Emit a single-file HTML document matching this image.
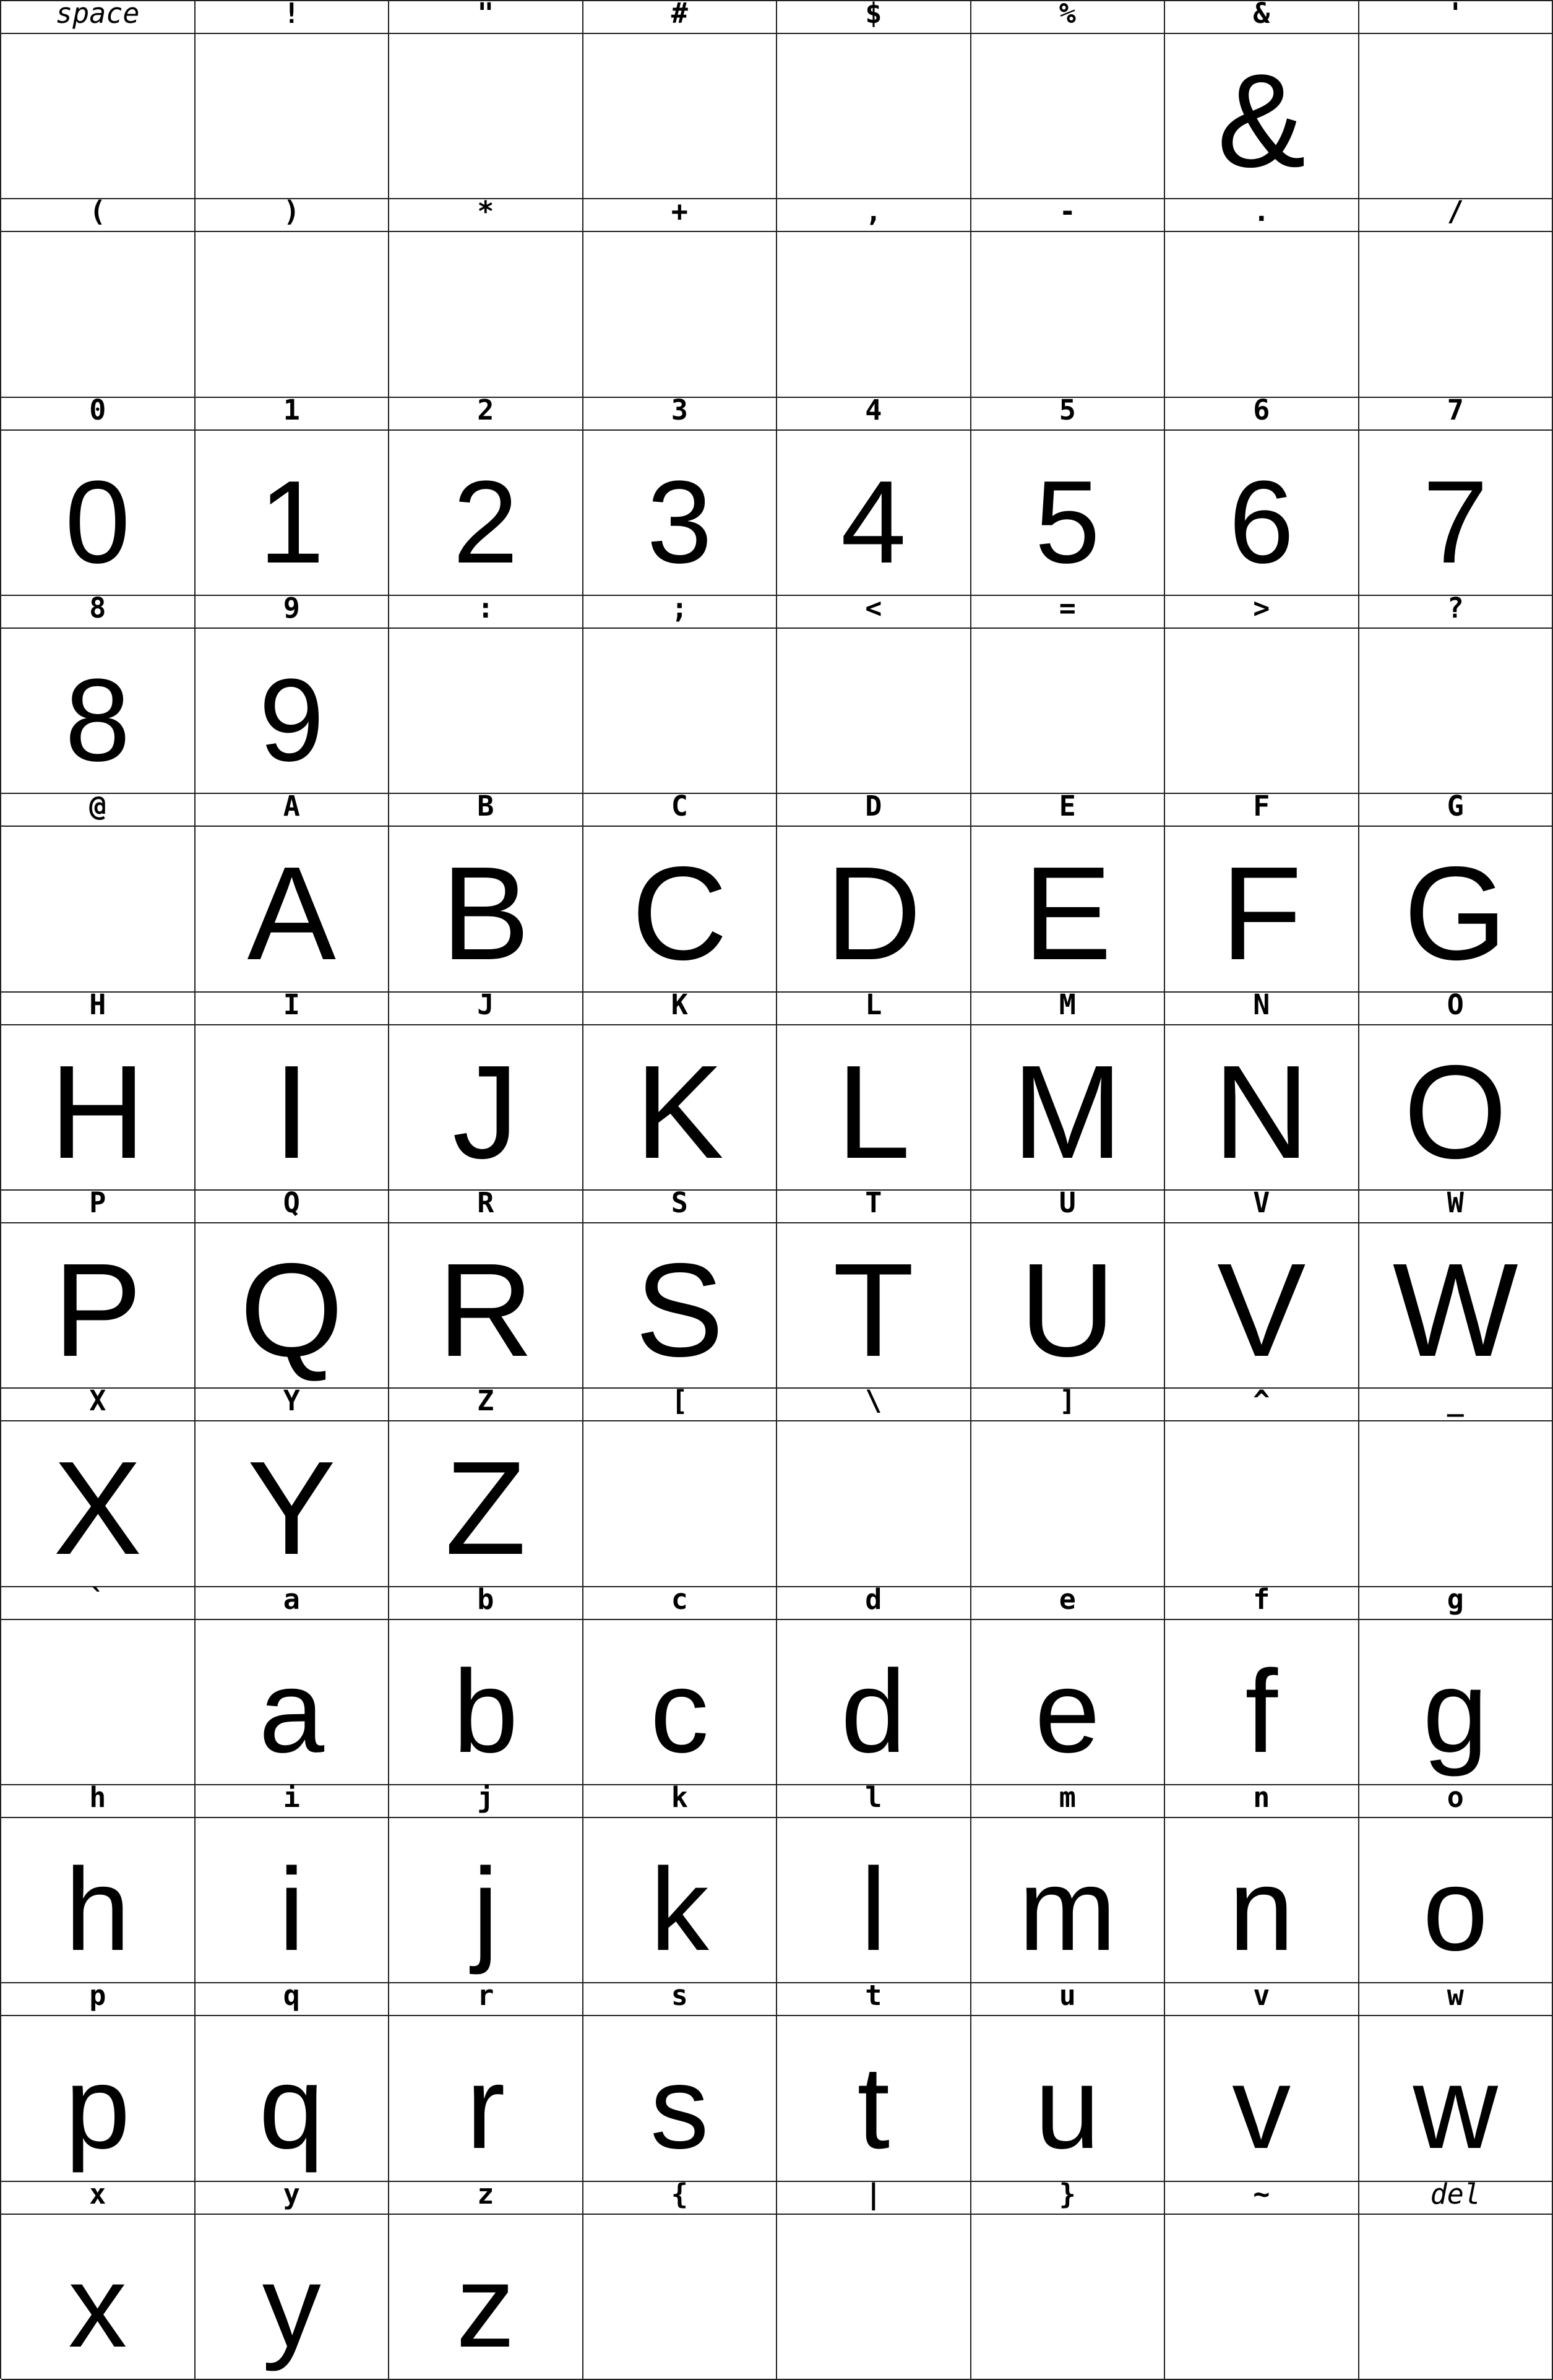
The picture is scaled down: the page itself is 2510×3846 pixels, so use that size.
<!DOCTYPE html>
<html><head><meta charset="utf-8"><style>
html,body{margin:0;padding:0;background:#fff;}
body{width:2510px;height:3844px;overflow:hidden;position:relative;}
.grid{position:absolute;left:0;top:0;width:2510px;height:3844px;display:grid;grid-template-columns:repeat(8,1fr);grid-template-rows:repeat(12,53px 267.33px);border-left:2px solid #222;border-top:2px solid #222;box-sizing:border-box;}
.grid>div{border-right:2px solid #222;border-bottom:2px solid #222;box-sizing:border-box;position:relative;overflow:visible;text-align:center;}
.h{font-family:"DejaVu Sans Mono","Liberation Mono",monospace;font-weight:bold;font-size:45px;line-height:53px;}
.h span{position:relative;top:-7px;display:inline-block;}
.h i{font-weight:normal;}
.g span{position:absolute;left:0;right:0;top:32px;font-family:"Liberation Sans",sans-serif;font-size:215px;line-height:215px;color:#000;}
.l span{top:53px;font-size:190px;line-height:190px;}
</style></head><body><div class="grid">
<div class="h"><span><i>space</i></span></div><div class="h"><span>!</span></div><div class="h"><span>"</span></div><div class="h"><span>#</span></div><div class="h"><span>$</span></div><div class="h"><span>%</span></div><div class="h"><span>&amp;</span></div><div class="h"><span>'</span></div>
<div class="g"></div><div class="g"></div><div class="g"></div><div class="g"></div><div class="g"></div><div class="g"></div><div class="g"><span>&amp;</span></div><div class="g"></div>
<div class="h"><span>(</span></div><div class="h"><span>)</span></div><div class="h"><span>*</span></div><div class="h"><span>+</span></div><div class="h"><span>,</span></div><div class="h"><span>-</span></div><div class="h"><span>.</span></div><div class="h"><span>/</span></div>
<div class="g"></div><div class="g"></div><div class="g"></div><div class="g"></div><div class="g"></div><div class="g"></div><div class="g"></div><div class="g"></div>
<div class="h"><span>0</span></div><div class="h"><span>1</span></div><div class="h"><span>2</span></div><div class="h"><span>3</span></div><div class="h"><span>4</span></div><div class="h"><span>5</span></div><div class="h"><span>6</span></div><div class="h"><span>7</span></div>
<div class="g l"><span>0</span></div><div class="g l"><span>1</span></div><div class="g l"><span>2</span></div><div class="g l"><span>3</span></div><div class="g l"><span>4</span></div><div class="g l"><span>5</span></div><div class="g l"><span>6</span></div><div class="g l"><span>7</span></div>
<div class="h"><span>8</span></div><div class="h"><span>9</span></div><div class="h"><span>:</span></div><div class="h"><span>;</span></div><div class="h"><span>&lt;</span></div><div class="h"><span>=</span></div><div class="h"><span>&gt;</span></div><div class="h"><span>?</span></div>
<div class="g l"><span>8</span></div><div class="g l"><span>9</span></div><div class="g"></div><div class="g"></div><div class="g"></div><div class="g"></div><div class="g"></div><div class="g"></div>
<div class="h"><span>@</span></div><div class="h"><span>A</span></div><div class="h"><span>B</span></div><div class="h"><span>C</span></div><div class="h"><span>D</span></div><div class="h"><span>E</span></div><div class="h"><span>F</span></div><div class="h"><span>G</span></div>
<div class="g"></div><div class="g"><span>A</span></div><div class="g"><span>B</span></div><div class="g"><span>C</span></div><div class="g"><span>D</span></div><div class="g"><span>E</span></div><div class="g"><span>F</span></div><div class="g"><span>G</span></div>
<div class="h"><span>H</span></div><div class="h"><span>I</span></div><div class="h"><span>J</span></div><div class="h"><span>K</span></div><div class="h"><span>L</span></div><div class="h"><span>M</span></div><div class="h"><span>N</span></div><div class="h"><span>O</span></div>
<div class="g"><span>H</span></div><div class="g"><span>I</span></div><div class="g"><span>J</span></div><div class="g"><span>K</span></div><div class="g"><span>L</span></div><div class="g"><span>M</span></div><div class="g"><span>N</span></div><div class="g"><span>O</span></div>
<div class="h"><span>P</span></div><div class="h"><span>Q</span></div><div class="h"><span>R</span></div><div class="h"><span>S</span></div><div class="h"><span>T</span></div><div class="h"><span>U</span></div><div class="h"><span>V</span></div><div class="h"><span>W</span></div>
<div class="g"><span>P</span></div><div class="g"><span>Q</span></div><div class="g"><span>R</span></div><div class="g"><span>S</span></div><div class="g"><span>T</span></div><div class="g"><span>U</span></div><div class="g"><span>V</span></div><div class="g"><span>W</span></div>
<div class="h"><span>X</span></div><div class="h"><span>Y</span></div><div class="h"><span>Z</span></div><div class="h"><span>[</span></div><div class="h"><span>\</span></div><div class="h"><span>]</span></div><div class="h"><span>^</span></div><div class="h"><span>_</span></div>
<div class="g"><span>X</span></div><div class="g"><span>Y</span></div><div class="g"><span>Z</span></div><div class="g"></div><div class="g"></div><div class="g"></div><div class="g"></div><div class="g"></div>
<div class="h"><span>`</span></div><div class="h"><span>a</span></div><div class="h"><span>b</span></div><div class="h"><span>c</span></div><div class="h"><span>d</span></div><div class="h"><span>e</span></div><div class="h"><span>f</span></div><div class="h"><span>g</span></div>
<div class="g"></div><div class="g l"><span>a</span></div><div class="g l"><span>b</span></div><div class="g l"><span>c</span></div><div class="g l"><span>d</span></div><div class="g l"><span>e</span></div><div class="g l"><span>f</span></div><div class="g l"><span>g</span></div>
<div class="h"><span>h</span></div><div class="h"><span>i</span></div><div class="h"><span>j</span></div><div class="h"><span>k</span></div><div class="h"><span>l</span></div><div class="h"><span>m</span></div><div class="h"><span>n</span></div><div class="h"><span>o</span></div>
<div class="g l"><span>h</span></div><div class="g l"><span>i</span></div><div class="g l"><span>j</span></div><div class="g l"><span>k</span></div><div class="g l"><span>l</span></div><div class="g l"><span>m</span></div><div class="g l"><span>n</span></div><div class="g l"><span>o</span></div>
<div class="h"><span>p</span></div><div class="h"><span>q</span></div><div class="h"><span>r</span></div><div class="h"><span>s</span></div><div class="h"><span>t</span></div><div class="h"><span>u</span></div><div class="h"><span>v</span></div><div class="h"><span>w</span></div>
<div class="g l"><span>p</span></div><div class="g l"><span>q</span></div><div class="g l"><span>r</span></div><div class="g l"><span>s</span></div><div class="g l"><span>t</span></div><div class="g l"><span>u</span></div><div class="g l"><span>v</span></div><div class="g l"><span>w</span></div>
<div class="h"><span>x</span></div><div class="h"><span>y</span></div><div class="h"><span>z</span></div><div class="h"><span>{</span></div><div class="h"><span>|</span></div><div class="h"><span>}</span></div><div class="h"><span>~</span></div><div class="h"><span><i>del</i></span></div>
<div class="g l"><span>x</span></div><div class="g l"><span>y</span></div><div class="g l"><span>z</span></div><div class="g"></div><div class="g"></div><div class="g"></div><div class="g"></div><div class="g"></div>
</div></body></html>
